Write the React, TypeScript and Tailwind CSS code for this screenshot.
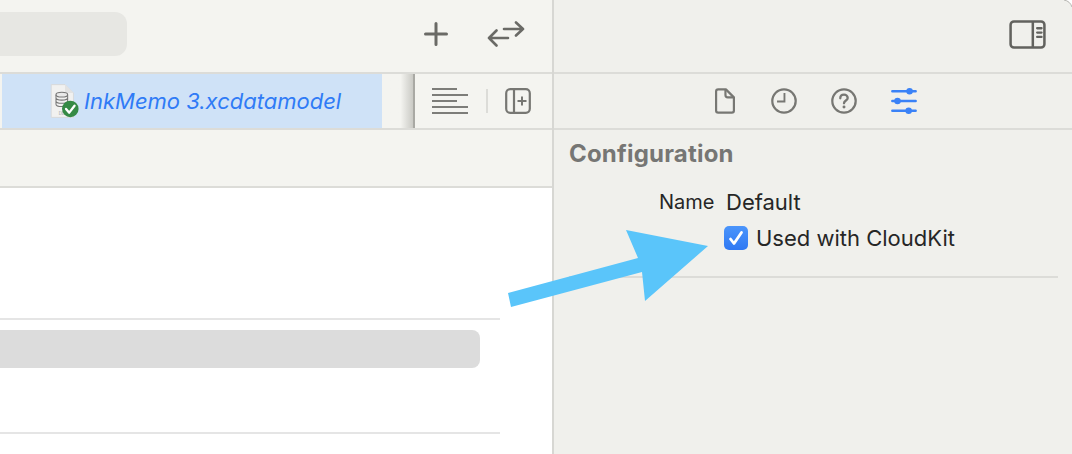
const FileBadgeIcon = () => (
  <svg width="32" height="36" viewBox="0 0 30 34" fill="none">
    <path d="M2 1.500h13l8 8v23H2z" fill="#f1f1f0" stroke="#d5d5d5" strokeWidth="0.7" />
    <path d="M15 1.500v8h8" fill="#e2e2e2" />
    <ellipse cx="12" cy="11" rx="5.500" ry="2.200" fill="#e9e9e9" stroke="#777" />
    <path d="M6.500 11v9c0 1.200 2.500 2.200 5.500 2.200s5.500-1 5.500-2.200v-9M6.500 14c0 1.200 2.500 2.200 5.500 2.200s5.500-1 5.500-2.200M6.500 17c0 1.200 2.500 2.200 5.500 2.200s5.500-1 5.500-2.200" stroke="#777" />
    <text x="9" y="30.500" fontSize="4" fill="#999">DB</text>
    <circle cx="20" cy="24.500" r="7.800" fill="#358a45" />
    <path d="M16 24.500l3 3.500 5-6.500" stroke="#fff" strokeWidth="2.200" strokeLinecap="round" strokeLinejoin="round" />
  </svg>
);

const PlusIcon = () => (
  <svg width="24" height="24" viewBox="0 0 24 24" fill="none" stroke="#6a6a66" strokeWidth="3" strokeLinecap="round">
    <path d="M12 1.500v21M1.500 12h21" />
  </svg>
);

const SwapIcon = () => (
  <svg width="38" height="26" viewBox="0 0 38 26" fill="none" stroke="#6a6a66" strokeWidth="2.600" strokeLinecap="round" strokeLinejoin="round">
    <path d="M17 8h19M29 1.500l7 6.500-7 6.500M2 17h19M9.500 9.500L2 17l7.500 7.500" />
  </svg>
);

const InspectorToggleIcon = () => (
  <svg width="37" height="29" viewBox="0 0 38 30" fill="none">
    <rect x="1.500" y="1.500" width="35" height="27" rx="3.500" stroke="#62625e" strokeWidth="2.600" />
    <path d="M24.500 2v26" stroke="#62625e" strokeWidth="2.600" />
    <path d="M29 8.500h4.500M29 13h4.500M29 17.500h4.500" stroke="#62625e" strokeWidth="2.400" strokeLinecap="round" />
  </svg>
);

const LinesIcon = () => (
  <div className="flex w-9 flex-col gap-1">
    <div className="h-0.5 w-[25px] bg-[#7d7d79]" />
    <div className="h-0.5 w-9 bg-[#7d7d79]" />
    <div className="h-0.5 w-[25px] bg-[#7d7d79]" />
    <div className="h-0.5 w-9 bg-[#7d7d79]" />
    <div className="h-0.5 w-9 bg-[#7d7d79]" />
  </div>
);

const SplitPlusIcon = () => (
  <svg width="26" height="26" viewBox="0 0 26 26" fill="none" stroke="#777773" strokeWidth="2.200">
    <rect x="1.200" y="1.200" width="23.600" height="23.600" rx="4" />
    <path d="M9 1v24" />
    <path d="M17 8.500v9M12.500 13h9" strokeWidth="2" />
  </svg>
);

const DocIcon = () => (
  <svg width="20" height="26" viewBox="0 0 22 28" fill="none" stroke="#777773" strokeWidth="2.400" strokeLinejoin="round">
    <path d="M3.500 1.200h8.500l8.800 8.800v14.500a2.300 2.300 0 0 1-2.300 2.300h-15a2.300 2.300 0 0 1-2.300-2.300v-21a2.300 2.300 0 0 1 2.300-2.300z" />
    <path d="M11.500 1.200v6.300a2.500 2.500 0 0 0 2.500 2.500h6.800" />
  </svg>
);

const ClockIcon = () => (
  <svg width="26" height="26" viewBox="0 0 28 28" fill="none" stroke="#777773" strokeWidth="2.400">
    <circle cx="14" cy="14" r="12.600" />
    <path d="M14.500 5.500v9H6.500" strokeWidth="2" />
  </svg>
);

const HelpIcon = () => (
  <svg width="26" height="26" viewBox="0 0 28 28" fill="none" stroke="#777773" strokeWidth="2.400">
    <circle cx="14" cy="14" r="12.600" />
    <path d="M10 11c0-2.300 1.800-3.800 4-3.800s4 1.500 4 3.500c0 2.800-4 2.800-4 5.800" strokeWidth="2.500" strokeLinecap="round" />
    <circle cx="14" cy="20.500" r="1.600" fill="#777773" stroke="none" />
  </svg>
);

const SlidersIcon = () => (
  <svg width="26" height="26" viewBox="0 0 28 28" fill="none" stroke="#3a82f7" strokeWidth="2.800" strokeLinecap="round">
    <path d="M1.500 3.500h25M1.500 14h25M1.500 24.500h25" />
    <circle cx="20" cy="3.500" r="3.500" fill="#3a82f7" stroke="none" />
    <circle cx="7" cy="14" r="3.500" fill="#3a82f7" stroke="none" />
    <circle cx="19" cy="24.500" r="3.500" fill="#3a82f7" stroke="none" />
  </svg>
);

const Overlay = () => (
  <svg className="pointer-events-none absolute left-0 top-0" width="1072" height="454" viewBox="0 0 1072 454">
    <polygon points="508,293 638,258 626,230 708,246 645,301 642,272 511,307" fill="#5ac5fa" />
    {/* window corner */}
    <path d="M1064 0Q1070 1 1072 7V0z" fill="#fff" />
    <path d="M1064 0Q1070 1 1072 7" fill="none" stroke="#b5b5b1" />
  </svg>
);

export default function App() {
  return (
    <div className="relative flex h-[454px] w-[1072px] overflow-hidden bg-white font-['Inter','Liberation_Sans',sans-serif]">
      {/* left editor */}
      <div className="flex w-[552px] flex-col">
        <div className="flex h-[74px] items-center justify-between border-b-2 border-[#dcdcd8] bg-[#f4f4f0] pb-1 pr-[27px]">
          <div className="h-11 w-[127px] rounded-r-xl bg-[#e7e7e3]" />
          <div className="flex items-center gap-[39px]">
            <PlusIcon />
            <SwapIcon />
          </div>
        </div>

        <div className="flex h-[56px] border-b-2 border-[#dcdcd8] bg-[#f4f4f0]">
          <div className="w-0.5" />
          <div className="flex w-[380px] items-center bg-[#cfe2f7] pl-[47px]">
            <FileBadgeIcon />
            <span className="ml-[3px] text-[22px] italic text-[#2f7bf6]">InkMemo 3.xcdatamodel</span>
          </div>
          <div className="h-full w-[31px] bg-gradient-to-r from-[#f4f4f0] from-60% to-[#cacac5]" />
          <div className="w-0.5 bg-[#a9a9a4]" />
          <div className="flex flex-1 items-center pl-[17px]">
            <LinesIcon />
            <div className="ml-[18px] mr-[17px] h-6 w-0.5 bg-[#dcdcd8]" />
            <SplitPlusIcon />
          </div>
        </div>

        <div className="h-[58px] border-b-2 border-[#dcdcd8] bg-[#f4f4f0]" />

        <div className="flex flex-1 flex-col bg-white pt-[130px]">
          <div className="h-0.5 w-[500px] bg-[#e5e5e5]" />
          <div className="mt-[10px] h-[38px] w-[480px] rounded-r-lg bg-[#dcdcdc]" />
          <div className="mt-[64px] h-0.5 w-[500px] bg-[#e5e5e5]" />
        </div>
      </div>

      <div className="w-0.5 bg-[#d7d7d3]" />

      {/* inspector */}
      <div className="flex flex-1 flex-col bg-[#f0f0ec]">
        <div className="flex h-[74px] items-center justify-end border-b-2 border-[#dcdcd8] pb-1 pr-[26px]">
          <InspectorToggleIcon />
        </div>
        <div className="flex h-[56px] items-center border-b-2 border-[#dcdcd8] pl-[161px]">
          <DocIcon />
          <div className="ml-[36px]"><ClockIcon /></div>
          <div className="ml-[34px]"><HelpIcon /></div>
          <div className="ml-[34px]"><SlidersIcon /></div>
        </div>
        <div className="pl-[15px] pt-[9px]">
          <div className="text-[24px] leading-[30px] font-bold tracking-[0.2px] text-[#767674]">Configuration</div>
          <div className="mt-[19px] flex items-center pl-[90px]">
            <span className="w-[67px] text-[20px] leading-[28px] text-[#262626]">Name</span>
            <span className="text-[22px] leading-[28px] text-[#262626]">Default</span>
          </div>
          <div className="mt-[8px] flex items-center pl-[155px]">
            <div className="flex h-6 w-6 items-center justify-center rounded-[5px] bg-gradient-to-b from-[#4b95fb] to-[#2f78f3]">
              <svg width="16" height="16" viewBox="0 0 16 16" fill="none" stroke="#fff" strokeWidth="2.800" strokeLinecap="round" strokeLinejoin="round">
                <path d="M2.500 9l3.500 4.500 7.500-11" />
              </svg>
            </div>
            <span className="ml-2 text-[22px] leading-[28px] text-[#262626]">Used with CloudKit</span>
          </div>
          <div className="mt-[24px] h-0.5 w-[489px] bg-[#dcdcd8]" />
        </div>
      </div>

      <Overlay />
    </div>
  );
}
